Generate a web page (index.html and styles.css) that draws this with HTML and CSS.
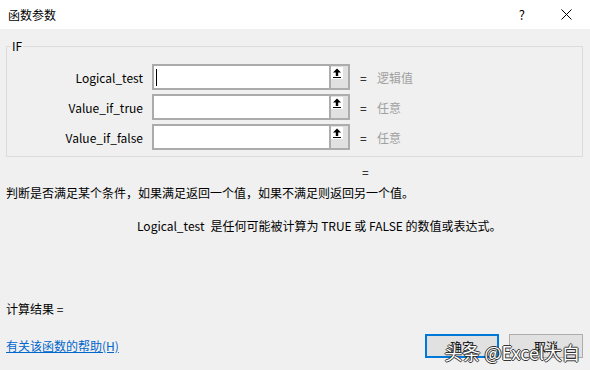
FILE: index.html
```html
<!DOCTYPE html>
<html lang="zh-CN">
<head>
  <meta charset="UTF-8" />
  <meta name="viewport" content="width=device-width, initial-scale=1.0" />
  <title>函数参数</title>
  <link rel="stylesheet" href="styles.css">
</head>
<body>
  <div class="titlebar">
    <span class="title">函数参数</span>
    <span class="help">?</span>
    <svg class="close" width="11" height="11" viewBox="0 0 11 11">
      <path d="M0.5 0.5 L10.5 10.5 M10.5 0.5 L0.5 10.5" stroke="#000" stroke-width="1" fill="none" />
    </svg>
  </div>

  <div class="dialog">
    <fieldset class="group">
      <legend>IF</legend>
      <div class="row">
        <span class="label">Logical_test</span>
        <span class="field"><span class="caret"></span></span>
        <span class="pick"><span class="pick-icon"><svg width="12" height="12" viewBox="0 0 12 12"><path d="M6 1.5 L2 5.5 H4.8 V9 H7.2 V5.5 H10 Z" fill="#000"/><rect x="2" y="10" width="8" height="1" fill="#000"/></svg></span></span>
        <span class="eq">=</span>
        <span class="hint">逻辑值</span>
      </div>
      <div class="row">
        <span class="label">Value_if_true</span>
        <span class="field"></span>
        <span class="pick"><span class="pick-icon"><svg width="12" height="12" viewBox="0 0 12 12"><path d="M6 1.5 L2 5.5 H4.8 V9 H7.2 V5.5 H10 Z" fill="#000"/><rect x="2" y="10" width="8" height="1" fill="#000"/></svg></span></span>
        <span class="eq">=</span>
        <span class="hint">任意</span>
      </div>
      <div class="row">
        <span class="label">Value_if_false</span>
        <span class="field"></span>
        <span class="pick"><span class="pick-icon"><svg width="12" height="12" viewBox="0 0 12 12"><path d="M6 1.5 L2 5.5 H4.8 V9 H7.2 V5.5 H10 Z" fill="#000"/><rect x="2" y="10" width="8" height="1" fill="#000"/></svg></span></span>
        <span class="eq">=</span>
        <span class="hint">任意</span>
      </div>
    </fieldset>

    <div class="result-eq">=</div>
    <div class="desc">判断是否满足某个条件，如果满足返回一个值，如果不满足则返回另一个值。</div>
    <div class="arg"><span class="arg-name">Logical_test</span>是任何可能被计算为 TRUE 或 FALSE 的数值或表达式。</div>

    <div class="result">计算结果 =</div>

    <div class="footer">
      <a class="help-link" href="#">有关该函数的帮助(H)</a>
      <div class="buttons">
        <button class="btn btn-ok">确定</button>
        <button class="btn">取消</button>
      </div>
    </div>
  </div>

  <div class="watermark">头条 @Excel大白</div>
</body>
</html>
```

FILE: styles.css
```css
body {
  margin: 0;
  width: 590px;
  height: 370px;
  overflow: hidden;
  position: relative;
  background: #f0f0f0;
  font-family: "Noto Sans CJK SC", "Noto Sans", sans-serif;
  font-size: 12px;
  color: #000;
}
.titlebar {
  height: 29px;
  background: #fff;
  display: flex;
  align-items: center;
  padding-left: 8px;
}
.title {
  flex: 1;
  font-size: 12px;
}
.help {
  margin-right: 36px;
  font-size: 13px;
}
.close {
  margin-right: 18px;
}
.dialog {
  padding: 0 7px 0 6px;
}
.group {
  margin: 9px 0 0;
  padding: 10px 0 6px;
  border: 1px solid #dcdcdc;
  min-width: 0;
}
.group legend {
  margin-left: 4px;
  padding: 0 1px;
  line-height: 16px;
  font-size: 12px;
}
.row {
  display: flex;
  align-items: center;
  height: 26px;
  margin-bottom: 4px;
}
.row:last-child {
  margin-bottom: 0;
}
.label {
  width: 136px;
  margin-right: 9px;
  text-align: right;
}
.field {
  box-sizing: border-box;
  width: 177px;
  height: 26px;
  background: #fff;
  border: 2px solid #ababab;
  border-right: none;
  display: flex;
  align-items: center;
  padding-left: 2px;
}
.caret {
  width: 1px;
  height: 17px;
  background: #000;
}
.pick {
  box-sizing: border-box;
  width: 21px;
  height: 26px;
  background: #e1e1e1;
  border: 2px solid #adadad;
  padding-top: 1px;
}
.pick-icon {
  display: block;
  width: 12px;
  height: 12px;
  background: #fff;
}
.pick-icon svg {
  display: block;
}
.eq {
  margin-left: 10px;
  width: 7px;
}
.hint {
  margin-left: 10px;
  color: #a0a0a0;
}
.result-eq {
  margin-top: 7px;
  padding-left: 356px;
  line-height: 16px;
}
.desc {
  margin-top: 5px;
  line-height: 16px;
}
.arg {
  margin-top: 17px;
  padding-left: 131px;
  line-height: 16px;
}
.arg-name {
  margin-right: 6px;
}
.result {
  margin-top: 67px;
  line-height: 16px;
}
.footer {
  margin-top: 17px;
  display: flex;
  align-items: center;
  justify-content: space-between;
}
.help-link {
  color: #0066cc;
  line-height: 16px;
}
.buttons {
  display: flex;
  gap: 10px;
}
.btn {
  box-sizing: border-box;
  width: 74px;
  height: 24px;
  background: #e1e1e1;
  border: 1px solid #adadad;
  font-family: inherit;
  font-size: 12px;
  color: #000;
  padding: 0;
}
.btn-ok {
  border: 2px solid #0078d7;
}
.watermark {
  position: absolute;
  right: 10px;
  bottom: 9px;
  font-size: 18px;
  line-height: 18px;
  color: #fff;
  text-shadow: -1px 0 #333, 1px 0 #333, 0 -1px #333, 0 1px #333;
}
```
